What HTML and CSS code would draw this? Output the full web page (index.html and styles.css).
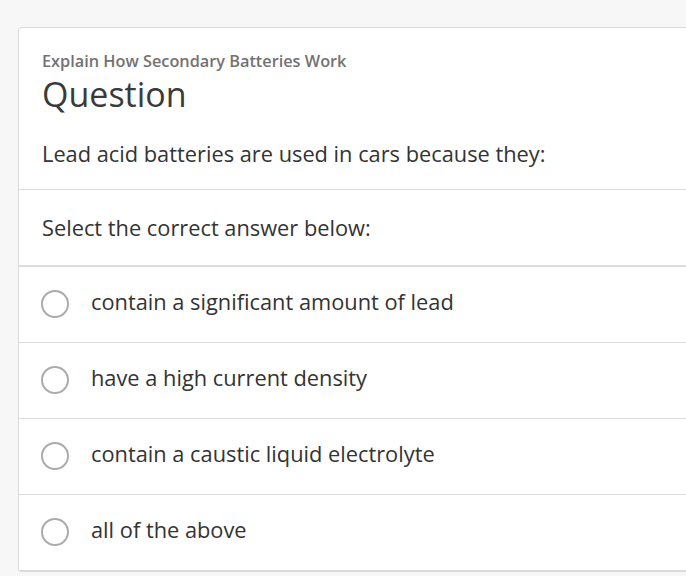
FILE: index.html
```html
<!DOCTYPE html>
<html>
<head>
<meta charset="utf-8">
<link rel="stylesheet" href="styles.css">
</head>
<body>
<div class="card">
  <div class="head">
    <div class="topic">Explain How Secondary Batteries Work</div>
    <h1 class="title">Question</h1>
    <p class="prompt">Lead acid batteries are used in cars because they:</p>
  </div>
  <div class="instr">Select the correct answer below:</div>
  <ul class="options">
    <li class="option"><span class="radio"></span><span class="label">contain a significant amount of lead</span></li>
    <li class="option"><span class="radio"></span><span class="label">have a high current density</span></li>
    <li class="option"><span class="radio"></span><span class="label">contain a caustic liquid electrolyte</span></li>
    <li class="option"><span class="radio"></span><span class="label">all of the above</span></li>
  </ul>
</div>
</body>
</html>
```
FILE: styles.css
```css
html, body {
  margin: 0;
  padding: 0;
  background: #f7f7f7;
}
body {
  font-family: "Open Sans", "DejaVu Sans", sans-serif;
  color: #333;
  height: 576px;
  overflow: hidden;
}
.card {
  margin: 27px 0 0 18px;
  width: 720px;
  background: #fff;
  border: 1px solid #dcdcdc;
  border-radius: 3px;
}
.head {
  padding: 22px 23px 0;
  border-bottom: 1px solid #dcdcdc;
  height: 139px;
  box-sizing: content-box;
}
.topic {
  font-weight: 600;
  font-size: 16.3px;
  line-height: 22px;
  color: #727272;
}
.title {
  margin: 0;
  font-weight: 400;
  font-size: 34px;
  line-height: 44px;
  color: #3a3a3a;
}
.prompt {
  margin: 23px 0 0;
  font-size: 21.8px;
  line-height: 30px;
  color: #333;
}
.instr {
  height: 75px;
  display: flex;
  align-items: center;
  padding: 0 23px;
  font-size: 21.8px;
  border-bottom: 2px solid #dcdcdc;
  color: #333;
}
.options {
  list-style: none;
  margin: 0;
  padding: 0;
}
.option {
  height: 75px;
  display: flex;
  align-items: center;
  padding: 0 22px;
  border-bottom: 1px solid #dcdcdc;
}
.radio {
  width: 24px;
  height: 24px;
  border: 2px solid #ababab;
  border-radius: 50%;
  flex: none;
  margin: 0 22px 2px 0;
}
.label {
  font-size: 21.8px;
  line-height: 30px;
  padding-bottom: 5px;
  color: #333;
}
```
